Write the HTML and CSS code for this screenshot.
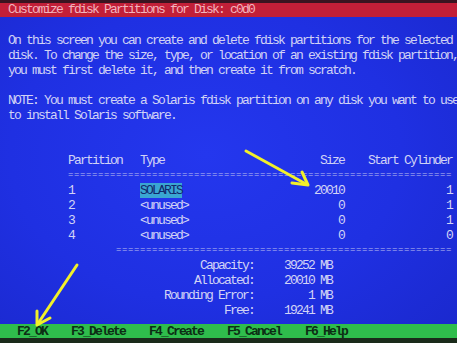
FILE: index.html
```html
<!DOCTYPE html>
<html>
<head>
    <title>Customize fdisk Partitions</title>
    <link rel="stylesheet" href="styles.css">
</head>
<body>
    <div class="screen">
        <div class="bezel-top"></div>
        <div class="title-bar">Customize fdisk Partitions for Disk: c0d0</div>

        <pre class="content">On this screen you can create and delete fdisk partitions for the selected
disk. To change the size, type, or location of an existing fdisk partition,
you must first delete it, and then create it from scratch.

NOTE: You must create a Solaris fdisk partition on any disk you want to use
to install Solaris software.


          Partition   Type                          Size    Start Cylinder
          <span class="rule">================================================================</span>
          1           <span class="hl">SOLARIS</span>                      20010                 1
          2           &lt;unused&gt;                         0                 1
          3           &lt;unused&gt;                         0                 1
          4           &lt;unused&gt;                         0                 0
                  <span class="rule">========================================================</span>
                                Capacity:     39252 MB
                               Allocated:     20010 MB
                          Rounding Error:         1 MB
                                    Free:     19241 MB</pre>

        <pre class="key-bar">F2_OK    F3_Delete    F4_Create    F5_Cancel    F6_Help</pre>
        <div class="bezel-bottom"></div>

        <svg class="arrows" width="457" height="343" viewBox="0 0 457 343">
            <g fill="none" stroke="#f2f02a" stroke-width="3" stroke-linecap="round" stroke-linejoin="round">
                <path d="M246 151 L306 184"/>
                <path d="M292 183 L308 185 L302 172"/>
                <path d="M77 265 L39 322"/>
                <path d="M37 311 L37 325 L50 318"/>
            </g>
        </svg>
    </div>
</body>
</html>
```

FILE: styles.css
```css
html, body {
    margin: 0;
    padding: 0;
}

body {
    background-color: #1c2bd8;
    font-family: "Liberation Mono", "DejaVu Sans Mono", monospace;
    font-size: 13px;
    letter-spacing: -1.8px;
    overflow: hidden;
}

.screen {
    position: relative;
    width: 457px;
    height: 343px;
    display: flex;
    flex-direction: column;
    overflow: hidden;
    background: radial-gradient(ellipse at 45% 45%, #2437ee 0%, #1f30e2 55%, #1a28cc 100%);
}

.bezel-top {
    height: 3px;
    background-color: #3a1420;
}

.title-bar {
    height: 14px;
    line-height: 14px;
    padding-left: 8px;
    background-color: #c21f38;
    color: #f2b4be;
    white-space: pre;
}

.content {
    flex: 1;
    margin: 0;
    padding: 16px 0 0 8px;
    font: inherit;
    line-height: 15px;
    color: #d2d3f6;
    overflow: hidden;
}

/* smaller glyphs, same 6px cell, so the ='s stay apart like on the console */
.rule {
    font-size: 9px;
    letter-spacing: 0.6px;
    line-height: 0;
    vertical-align: 2px;
    color: #b8bcf0;
}

.hl {
    background-color: #3aa6d2;
    color: #12286a;
}

.key-bar {
    margin: 0;
    height: 14px;
    line-height: 14px;
    padding-left: 17px;
    font: inherit;
    font-weight: bold;
    background-color: #2fbd4c;
    color: #0c2e14;
}

.bezel-bottom {
    height: 5px;
    background-color: #1a2a1a;
}

.arrows {
    position: absolute;
    left: 0;
    top: 0;
}
```
